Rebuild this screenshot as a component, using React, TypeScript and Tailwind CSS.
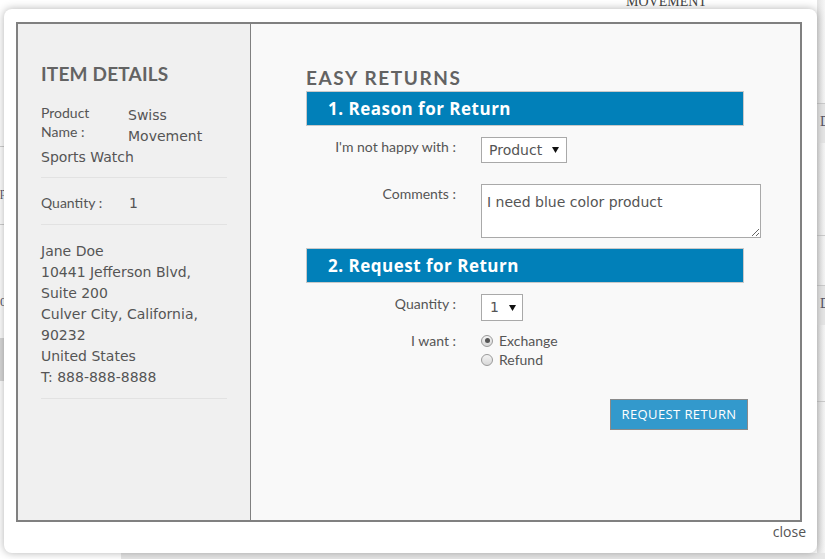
import React from "react";

function Radio({ checked }: { checked?: boolean }) {
  return (
    <span className="flex h-[12px] w-[12px] items-center justify-center rounded-full border border-[#9a9a9a] bg-gradient-to-b from-[#f4f4f4] to-[#d8d8d8]">
      {checked ? <span className="h-[5px] w-[5px] rounded-full bg-[#555]" /> : null}
    </span>
  );
}

function Arrow() {
  return (
    <svg width="7" height="6" viewBox="0 0 7 6" className="shrink-0">
      <polygon points="0,0 7,0 3.5,6" fill="#111" />
    </svg>
  );
}

export default function App() {
  const lato = "font-['Lato',sans-serif]";
  const dejavu = "font-['DejaVu_Sans',sans-serif]";
  return (
    <div className="relative h-[559px] w-[825px] overflow-hidden bg-white">
      {/* background page */}
      <div className="flex h-full flex-col">
        <div className="flex flex-1">
          <div className="flex w-[4px] flex-col">
            <div className="h-[146px]" />
            <div className="h-[78px] border-t border-[#cfcfcf] overflow-hidden pt-[38px] pl-0 font-['Liberation_Serif',serif] text-[13px] leading-[14px] text-[#556]">p</div>
            <div className="h-[114px] border-t border-[#cfcfcf] overflow-hidden pt-[70px] font-['Liberation_Serif',serif] text-[13px] leading-[14px] text-[#556]">0</div>
            <div className="h-[43px] bg-[#d9d9d9]" />
            <div className="flex-1" />
          </div>
          <div className="flex-1" />
          <div className="flex w-[8px] flex-col bg-gradient-to-r from-[#e2e2e2] to-[#f6f6f6]">
            <div className="h-[103px]" />
            <div className="h-[40px] border-t border-[#cccccc] bg-[#e6e6e6] overflow-hidden pt-[10px] pl-[3px] font-['Liberation_Serif',serif] text-[14px] leading-[16px] text-[#556]">D</div>
            <div className="h-[92px]" />
            <div className="h-[50px] border-t border-[#cccccc]" />
            <div className="h-[40px] border-t border-[#cccccc] bg-[#e6e6e6] overflow-hidden pt-[10px] pl-[3px] font-['Liberation_Serif',serif] text-[14px] leading-[16px] text-[#556]">D</div>
            <div className="h-[76px]" />
            <div className="flex-1 border-t border-[#cccccc]" />
          </div>
        </div>
        <div className="flex h-[6px]">
          <div className="w-[121px]" />
          <div className="flex-1 bg-[#e6e6e6]" />
        </div>
      </div>
      <div className="absolute left-[626px] top-[-6px] font-['Liberation_Serif',serif] text-[14px] leading-[16px] text-[#444]">
        MOVEMENT
      </div>

      {/* modal */}
      <div className="absolute left-[4px] top-[9px] h-[544px] w-[813px] rounded-[8px] bg-white shadow-[0_0_9px_rgba(0,0,0,0.3)]">
        <div className="ml-[12px] mt-[13px] flex h-[500px] w-[786px] border-2 border-[#808080]">
          {/* left panel */}
          <div className={`w-[233px] shrink-0 border-r border-[#808080] bg-[#f0f0f0] px-[23px] pt-[38px] text-[#555]`}>
            <div className={`${lato} text-[19px] font-bold leading-[23px] tracking-[0.2px] text-[#636363]`}>ITEM DETAILS</div>
            <div className={`flow-root border-b border-[#e2e2e2] pt-[20px] pb-[9px] ${dejavu} text-[14px] leading-[21px]`}>
              <div className={`float-left -mt-[2px] w-[87px] ${lato} text-[14px] leading-[19px] text-[#555]`}>
                Product
                <br />
                Name :
              </div>
              Swiss Movement Sports Watch
            </div>
            <div className={`flow-root border-b border-[#e2e2e2] pt-[15px] pb-[10px] ${dejavu} text-[14px] leading-[21px]`}>
              <div className={`float-left w-[88px] ${lato} text-[14px] leading-[19px]`}>Quantity :</div>
              1
            </div>
            <div className={`border-b border-[#e2e2e2] pt-[16px] pb-[10px] ${dejavu} text-[14px] leading-[21px]`}>
              <div>Jane Doe</div>
              <div>10441 Jefferson Blvd,</div>
              <div>Suite 200</div>
              <div>Culver City, California,</div>
              <div>90232</div>
              <div>United States</div>
              <div>T: 888-888-8888</div>
            </div>
          </div>

          {/* right panel */}
          <div className="flex-1 bg-[#f9f9f9] pl-[55px] pt-[42px] text-[#555]">
            <div className={`${lato} text-[19px] font-bold leading-[23px] tracking-[1.6px] text-[#636363]`}>EASY RETURNS</div>
            <div className="mt-[2px] flex h-[35px] w-[438px] items-center border border-[#c9c9c9] bg-[#0180b9] pl-[21px] font-['Open_Sans',sans-serif] text-[17px] font-bold tracking-[0.5px] text-white">
              1. Reason for Return
            </div>
            <div className="mt-[11px] flex">
              <div className={`w-[150px] text-right ${lato} text-[14px] leading-[19px]`}>I'm not happy with :</div>
              <div className={`ml-[25px] flex h-[26px] w-[86px] items-center justify-between border border-[#a9a9a9] bg-white pl-[7px] pr-[7px] ${dejavu} text-[14px]`}>
                <span>Product</span>
                <Arrow />
              </div>
            </div>
            <div className="mt-[21px] flex">
              <div className={`w-[150px] text-right ${lato} text-[14px] leading-[19px]`}>Comments :</div>
              <textarea
                readOnly
                defaultValue="I need blue color product"
                className={`ml-[25px] h-[54px] w-[280px] border border-[#a9a9a9] bg-white px-[5px] pt-[7px] pb-[3px] ${dejavu} text-[14px] leading-[20px] text-[#555] outline-none`}
              />
            </div>
            <div className="mt-[10px] flex h-[35px] w-[438px] items-center border border-[#c9c9c9] bg-[#0180b9] pl-[21px] font-['Open_Sans',sans-serif] text-[17px] font-bold tracking-[0.5px] text-white">
              2. Request for Return
            </div>
            <div className="mt-[11px] flex">
              <div className={`w-[150px] text-right ${lato} text-[14px] leading-[19px]`}>Quantity :</div>
              <div className={`ml-[25px] flex h-[27px] w-[42px] items-center justify-between border border-[#a9a9a9] bg-white pl-[8px] pr-[6px] ${dejavu} text-[14px]`}>
                <span>1</span>
                <Arrow />
              </div>
            </div>
            <div className="mt-[10px] flex">
              <div className={`w-[150px] text-right ${lato} text-[14px] leading-[19px]`}>I want :</div>
              <div className={`ml-[25px] flex flex-col ${lato} text-[14px] leading-[19px]`}>
                <div className="flex items-center gap-[6px]">
                  <Radio checked />
                  <span>Exchange</span>
                </div>
                <div className="flex items-center gap-[6px]">
                  <Radio />
                  <span>Refund</span>
                </div>
              </div>
            </div>
            <div className="ml-[304px] mt-[30px] flex h-[31px] w-[138px] items-center justify-center border border-[#8a8a8a] bg-[#3399cc] font-['Open_Sans',sans-serif] text-[13px] tracking-[0.4px] text-white">
              REQUEST RETURN
            </div>
          </div>
        </div>
        <div className="pr-[11px] text-right font-['Open_Sans',sans-serif] text-[14px] leading-[19px] text-[#555]">close</div>
      </div>
    </div>
  );
}
